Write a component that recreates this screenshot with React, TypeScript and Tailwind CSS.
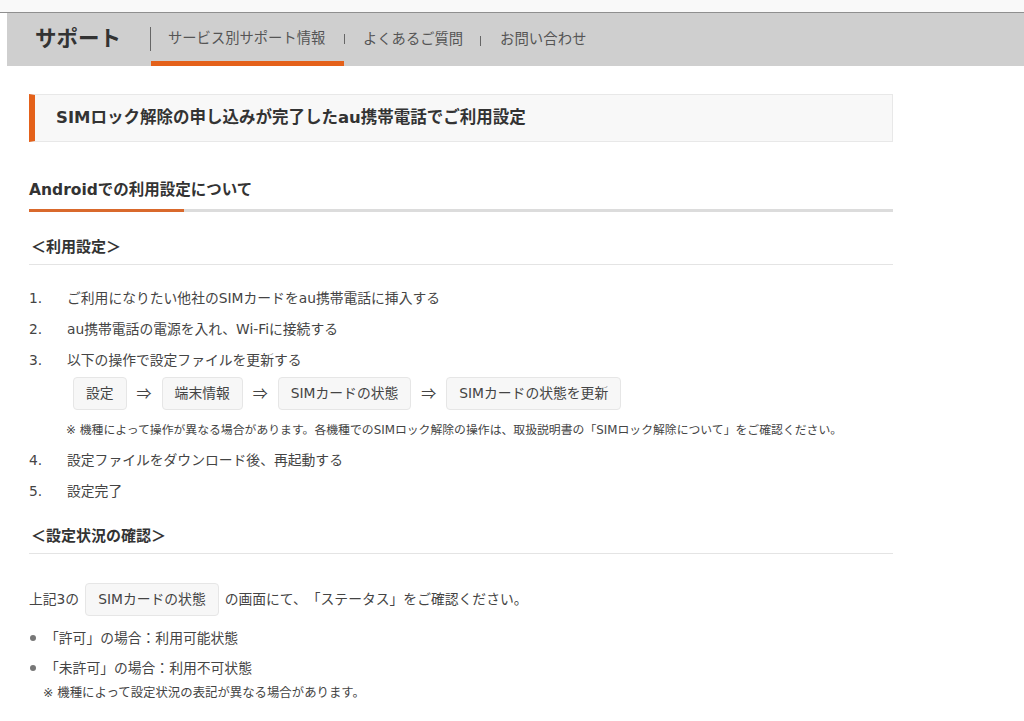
const font = "font-['DejaVu_Sans','Noto_Sans_CJK_JP',sans-serif]";

function Chip({ children }: { children: React.ReactNode }) {
  return (
    <span className="inline-flex h-[33px] items-center rounded-[4px] border border-[#e6e6e6] bg-[#f7f7f7] px-3 text-[13.8px] text-[#444]">
      {children}
    </span>
  );
}

function Step({ num, children }: { num: string; children: React.ReactNode }) {
  return (
    <div className="flex h-[31px] items-center text-[13.8px] text-[#444]">
      <span className="w-[38px]">{num}</span>
      <span>{children}</span>
    </div>
  );
}

function Arrow() {
  return <span className="mx-[9px] w-[17px] text-center font-['Noto_Sans_CJK_JP',sans-serif] text-[15px] text-[#444]">⇒</span>;
}

function SubHead({ children }: { children: React.ReactNode }) {
  return (
    <div className="flex h-[29px] items-start border-b border-[#e4e4e4] pt-px pl-[2px] text-[15px] leading-[20px] font-bold text-[#333]">
      {children}
    </div>
  );
}

export default function App() {
  return (
    <div className={`${font} h-[721px] w-[1024px] overflow-hidden bg-white`}>
      <div className="h-[13px] border-b border-[#8f8f8f] bg-[#f9f9f9]" />

      {/* nav */}
      <div className="ml-[7px] flex h-[53px] items-start bg-[#cfcfcf]">
        <div className="mt-[11px] ml-[28px] w-[115px] text-[21.5px] leading-[30px] font-bold whitespace-nowrap text-[#333]">サポート</div>
        <div className="flex h-[53px] w-[194px] flex-col">
          <div className="mt-[14px] flex h-[24px] items-center border-l border-[#666] pl-[17px] text-[14.3px] whitespace-nowrap text-[#555]">
            サービス別サポート情報
          </div>
          <div className="mt-auto ml-px h-[5px] bg-[#e4611a]" />
        </div>
        <div className="mt-[21px] h-[10px] w-px bg-[#666]" />
        <div className="mt-[14px] ml-[18px] text-[14.3px] leading-[24px] text-[#555]">よくあるご質問</div>
        <div className="mt-[23px] ml-[17px] h-[10px] w-px bg-[#666]" />
        <div className="mt-[14px] ml-[19px] text-[14.4px] leading-[24px] text-[#555]">お問い合わせ</div>
      </div>

      <div className="ml-[7px] w-[886px] pl-[22px]">
        {/* title box */}
        <div className="mt-[28px] flex h-[48px] items-center border-y border-r border-[#e8e8e8] border-l-[6px] border-l-[#e4611a] bg-[#f8f8f8] pl-[21px] text-[16.5px] font-bold whitespace-nowrap text-[#333]">
          SIMロック解除の申し込みが完了したau携帯電話でご利用設定
        </div>

        <div className="mt-[37px] h-[24px] text-[15.5px] leading-[22px] font-bold text-[#333]">Androidでの利用設定について</div>
        <div className="mt-[6px] flex h-[3px] bg-[#dcdcdc]">
          <div className="w-[155px] bg-[#d9692c]" />
        </div>

        <div className="mt-[24px]">
          <SubHead>＜利用設定＞</SubHead>
        </div>

        <div className="mt-[18px]">
          <Step num="1.">ご利用になりたい他社のSIMカードをau携帯電話に挿入する</Step>
          <Step num="2.">au携帯電話の電源を入れ、Wi-Fiに接続する</Step>
          <Step num="3.">以下の操作で設定ファイルを更新する</Step>
        </div>

        <div className="mt-[1px] ml-[44px] flex items-center">
          <Chip>設定</Chip>
          <Arrow />
          <Chip>端末情報</Chip>
          <Arrow />
          <Chip>SIMカードの状態</Chip>
          <Arrow />
          <Chip>SIMカードの状態を更新</Chip>
        </div>

        <div className="mt-[10px] ml-[37px] h-[20px] text-[11.85px] leading-[20px] whitespace-nowrap text-[#444]">
          ※ 機種によって操作が異なる場合があります。各機種でのSIMロック解除の操作は、取扱説明書の「SIMロック解除について」をご確認ください。
        </div>

        <div className="mt-[5px]">
          <Step num="4.">設定ファイルをダウンロード後、再起動する</Step>
          <Step num="5.">設定完了</Step>
        </div>

        <div className="mt-[18px]">
          <SubHead>＜設定状況の確認＞</SubHead>
        </div>

        <div className="mt-[29px] flex items-center text-[13.8px] text-[#444] [text-spacing-trim:space-all]">
          <span>上記3の</span>
          <span className="mx-[6px] flex">
            <Chip>SIMカードの状態</Chip>
          </span>
          <span>の画面にて、「ステータス」をご確認ください。</span>
        </div>

        <div className="mt-[7px] flex h-[30px] items-center text-[13.8px] text-[#444]">
          <span className="mr-[9px] ml-px h-[6px] w-[6px] rounded-full bg-[#777]" />
          <span>「許可」の場合：利用可能状態</span>
        </div>
        <div className="flex h-[30px] items-center text-[13.8px] text-[#444]">
          <span className="mr-[9px] ml-px h-[6px] w-[6px] rounded-full bg-[#777]" />
          <span>「未許可」の場合：利用不可状態</span>
        </div>
        <div className="mt-[2px] ml-[14px] text-[12.4px] leading-[16px] text-[#444]">※ 機種によって設定状況の表記が異なる場合があります。</div>
      </div>
    </div>
  );
}
